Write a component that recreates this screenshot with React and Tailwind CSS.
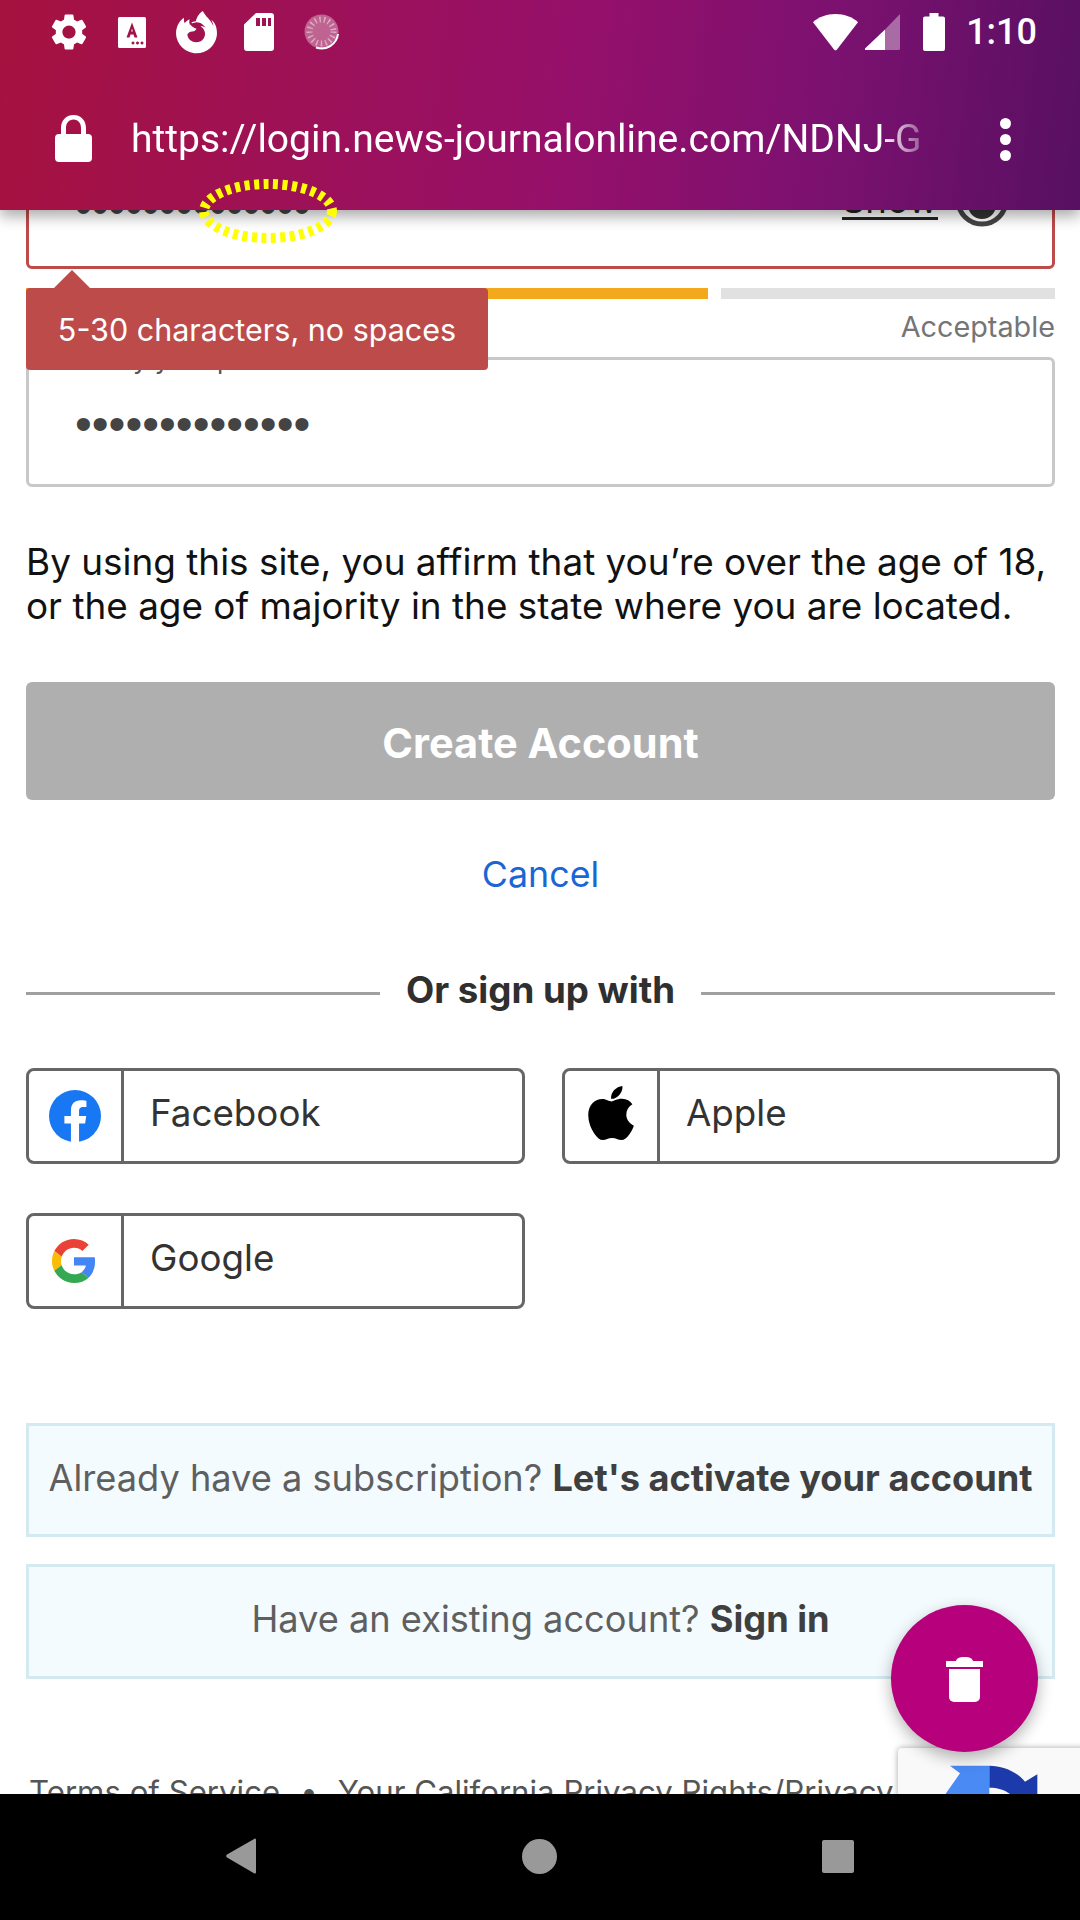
import React from "react";
import { FaFirefoxBrowser, FaApple } from "react-icons/fa";

const FONT = "font-['Inter','Noto_Sans',sans-serif]";

function Dots({ className = "" }) {
  return (
    <div className={`font-['Liberation_Sans',sans-serif] text-[48px] leading-[34px] tracking-[0px] text-[#444444] ${className}`}>
      ••••••••••••••
    </div>
  );
}

function StatusBar() {
  return (
    <div className="flex h-[64px] items-center justify-between pl-[50px] pr-[43px]">
      <div className="flex items-center">
        <svg viewBox="0 0 24 24" className="h-[44px] w-[44px] -ml-[3px] fill-white">
          <path d="M19.14 12.94c.04-.3.06-.61.06-.94 0-.32-.02-.64-.07-.94l2.03-1.58a.49.49 0 0 0 .12-.61l-1.92-3.32a.488.488 0 0 0-.59-.22l-2.39.96c-.5-.38-1.03-.7-1.62-.94l-.36-2.54a.484.484 0 0 0-.48-.41h-3.84c-.24 0-.43.17-.47.41l-.36 2.54c-.59.24-1.13.57-1.62.94l-2.39-.96c-.22-.08-.47 0-.59.22L2.74 8.87c-.12.21-.08.47.12.61l2.03 1.58c-.05.3-.09.63-.09.94s.02.64.07.94l-2.03 1.58a.49.49 0 0 0-.12.61l1.92 3.32c.12.22.37.29.59.22l2.39-.96c.5.38 1.03.7 1.62.94l.36 2.54c.05.24.24.41.48.41h3.84c.24 0 .44-.17.47-.41l.36-2.54c.59-.24 1.13-.56 1.62-.94l2.39.96c.22.08.47 0 .59-.22l1.92-3.32c.12-.22.07-.47-.12-.61l-2.01-1.58zM12 15.6c-1.98 0-3.6-1.62-3.6-3.6s1.62-3.6 3.6-3.6 3.6 1.62 3.6 3.6-1.62 3.6-3.6 3.6z" />
        </svg>
        <svg viewBox="0 0 28 31" className="ml-[27px] h-[31px] w-[28px]">
          <path fillRule="evenodd" fill="#fff" d="M1.500 0h25A1.500 1.500 0 0 1 28 1.500v28a1.500 1.500 0 0 1-1.500 1.500h-25A1.500 1.500 0 0 1 0 29.500v-28A1.500 1.500 0 0 1 1.500 0zM14 5.500l-5.500 15h3l1-3h3l1 3h3zM13.200 14.500l.8-3 .8 3zM15 24.500a1.500 1.500 0 1 0 .01 0zM19.500 24.500a1.500 1.500 0 1 0 .01 0zM24 24.500a1.500 1.500 0 1 0 .01 0z" />
        </svg>
        <FaFirefoxBrowser className="ml-[29px] h-[43px] w-[43px] text-white" />
        <svg viewBox="0 0 30 38" className="ml-[26px] h-[38px] w-[30px]">
          <path fillRule="evenodd" fill="#fff" d="M12 0h15a3 3 0 0 1 3 3v32a3 3 0 0 1-3 3H3a3 3 0 0 1-3-3V11.500zM12 5v8h4V5zM18 5v8h4V5zM24 5v8h3V5z" />
        </svg>
        <svg viewBox="0 0 36 36" className="ml-[30px] h-[36px] w-[36px]">
          <circle cx="17.500" cy="17.500" r="17" fill="#fff" fillOpacity="0.35" />
          <circle cx="17.500" cy="17.500" r="12" fill="none" stroke="#fff" strokeOpacity="0.45" strokeWidth="6" strokeDasharray="1.500 3" />
          <path d="M34 20a16.500 16.500 0 0 1-22 13.500" fill="none" stroke="#fff" strokeWidth="2" />
        </svg>
      </div>
      <div className="flex items-center">
        <svg viewBox="0 0 45 37" className="h-[37px] w-[45px] fill-white">
          <path d="M22.500 0C13.500 0 5.700 3 0 8.200L21 35.500a2 2 0 0 0 3 0L45 8.200C39.300 3 31.500 0 22.500 0z" />
        </svg>
        <svg viewBox="0 0 35 36" className="ml-[7px] h-[36px] w-[35px]">
          <path d="M20 15.500L0 34.500V36h20z" fill="#fff" />
          <path d="M20 15.500L35 0v34.500a1.500 1.500 0 0 1-1.500 1.500H20z" fill="#fff" fillOpacity="0.38" />
        </svg>
        <svg viewBox="0 0 22 38" className="ml-[23px] h-[38px] w-[22px] fill-white">
          <path d="M6.500 0h9v3.500H20a2 2 0 0 1 2 2V36a2 2 0 0 1-2 2H2a2 2 0 0 1-2-2V5.500a2 2 0 0 1 2-2h4.500z" />
        </svg>
        <span className="ml-[21px] font-['Roboto',sans-serif] text-[36px] font-medium leading-[40px] text-white">1:10</span>
      </div>
    </div>
  );
}

function UrlBar() {
  return (
    <div className="mt-[32px] flex h-[86px] items-center pl-[55px] pr-[69px]">
      <svg viewBox="0 0 37 47" className="-mt-[1px] h-[47px] w-[37px] fill-white">
        <path fillRule="evenodd" d="M18.500 0C10.500 0 6 6 6 13v6H4a4 4 0 0 0-4 4v20a4 4 0 0 0 4 4h29a4 4 0 0 0 4-4V23a4 4 0 0 0-4-4h-2v-6C31 6 26.500 0 18.500 0zM11 19v-6c0-5 3-8.500 7.500-8.500S26 8 26 13v6z" />
      </svg>
      <div className="ml-[39px] w-[790px] overflow-hidden whitespace-nowrap font-['Roboto',sans-serif] text-[39px] leading-[48px] text-white [mask-image:linear-gradient(to_right,#000_95%,rgba(0,0,0,0.3)_100%)]">
        https://login.news-journalonline.com/NDNJ-G
      </div>
      <div className="ml-auto flex flex-col gap-[5px]">
        <span className="h-[11px] w-[11px] rounded-full bg-white" />
        <span className="h-[11px] w-[11px] rounded-full bg-white" />
        <span className="h-[11px] w-[11px] rounded-full bg-white" />
      </div>
    </div>
  );
}

function Social({ label, children }) {
  return (
    <div className="flex h-[96px] rounded-[8px] border-[3px] border-[#666666] bg-white">
      <div className="flex w-[95px] items-center justify-center border-r-[3px] border-[#666666]">{children}</div>
      <div className="flex items-center pb-[6px] pl-[26px] text-[36.750px] leading-[44px] text-[#333333]">{label}</div>
    </div>
  );
}

export default function App() {
  return (
    <div className={`relative flex h-[1920px] w-[1080px] flex-col overflow-hidden bg-white ${FONT}`}>
      <header className="relative z-20 h-[210px] shrink-0 bg-[linear-gradient(97deg,#a6123f_0%,#96106a_52%,#7c1170_76%,#571062_100%)] shadow-[0_6px_14px_rgba(0,0,0,0.35)]">
        <StatusBar />
        <UrlBar />
      </header>

      <main className="relative flex-1 overflow-hidden pl-[26px] pr-[25px]">
        <div className="relative -mt-[71px] flex h-[130px] items-center rounded-[6px] border-[3px] border-[#bd4b4a] pl-[46px] pr-[43px]">
          <Dots className="mt-[6px]" />
          <span className="ml-auto mt-[-6px] border-b-[3px] border-[#222222] text-[36.500px] leading-[34px] text-[#222222]">Show</span>
          <svg viewBox="0 0 54 54" className="ml-[17px] mt-[-8px] h-[54px] w-[54px]">
            <circle cx="27" cy="27" r="24" fill="none" stroke="#444444" strokeWidth="5" />
            <circle cx="27" cy="32" r="14" fill="#333333" />
          </svg>
        </div>

        <div className="mt-[19px] flex h-[11px] gap-[13px]">
          <div className="flex-1 bg-[#f4a81c]" />
          <div className="flex-1 bg-[#f4a81c]" />
          <div className="flex-1 bg-[#e1e1e1]" />
        </div>

        <div className="flex h-[58px] justify-end pt-[12px] text-[28.800px] leading-[32px] text-[#757575]">Acceptable</div>

        <div className="flex h-[130px] flex-col rounded-[6px] border-[3px] border-[#c8c8c8] pl-[46px]">
          <span className="-mt-[16px] text-[26px] leading-[32px] text-[#555555]">Verify your password</span>
          <Dots className="mt-[31px]" />
        </div>

        <p className="mt-[53px] whitespace-nowrap text-[36.900px] leading-[44px] text-[#111111]">
          By using this site, you affirm that you’re over the age of 18,
          <br />
          or the age of majority in the state where you are located.
        </p>

        <button className="mt-[54px] flex h-[118px] w-full items-center justify-center rounded-[6px] bg-[#afafaf] pt-[4px] text-[41.500px] font-bold text-white">
          Create Account
        </button>

        <div className="mt-[52px] text-center text-[35.800px] leading-[44px] text-[#1a66d4]">Cancel</div>

        <div className="mt-[72px] flex h-[50px] items-center">
          <div className="h-[3px] flex-1 bg-[#a0a0a0]" />
          <span className="-mt-[6px] px-[26px] text-[36.700px] font-bold leading-[44px] text-[#2f2f2f]">Or sign up with</span>
          <div className="h-[3px] flex-1 bg-[#a0a0a0]" />
        </div>

        <div className="mt-[50px] grid w-[1034px] grid-cols-[499px_498px] gap-x-[37px] gap-y-[49px]">
          <Social label="Facebook">
            <svg viewBox="0 0 50 50" className="h-[52px] w-[52px]">
              <circle cx="25" cy="25" r="25" fill="#1877f2" />
              <path fill="#fff" d="M34.700 32.200L35.800 25H28.900v-4.700c0-2 1-3.900 4-3.900H36V10.300s-2.800-.5-5.500-.5c-5.700 0-9.400 3.400-9.400 9.700V25H14.800v7.200h6.300V50a25 25 0 0 0 7.800 0V32.200z" />
            </svg>
          </Social>
          <Social label="Apple">
            <FaApple className="h-[62px] w-[56px] -translate-y-[3px] text-black" />
          </Social>
          <Social label="Google">
            <svg viewBox="0 0 48 48" className="h-[44px] w-[44px] -translate-x-[1px]">
              <path fill="#EA4335" d="M24 9.500c3.540 0 6.710 1.220 9.210 3.600l6.850-6.850C35.900 2.380 30.470 0 24 0 14.620 0 6.510 5.380 2.560 13.220l7.980 6.190C12.430 13.720 17.740 9.500 24 9.500z" />
              <path fill="#4285F4" d="M46.980 24.550c0-1.570-.15-3.090-.38-4.550H24v9.020h12.940c-.58 2.960-2.260 5.480-4.780 7.180l7.730 6c4.510-4.180 7.090-10.360 7.090-17.650z" />
              <path fill="#FBBC05" d="M10.530 28.590c-.48-1.450-.76-2.990-.76-4.590s.27-3.140.76-4.590l-7.980-6.190C.92 16.460 0 20.120 0 24c0 3.880.92 7.540 2.560 10.780l7.970-6.190z" />
              <path fill="#34A853" d="M24 48c6.480 0 11.930-2.130 15.890-5.810l-7.730-6c-2.150 1.450-4.920 2.300-8.160 2.300-6.260 0-11.570-4.220-13.470-9.910l-7.980 6.190C6.510 42.620 14.620 48 24 48z" />
            </svg>
          </Social>
        </div>

        <div className="mt-[114px] flex h-[114px] items-center justify-center whitespace-nowrap border-[3px] border-[#d5e9f1] bg-[#f3fbfe] pb-[4px] text-[36.200px] text-[#5f5f5f]">
          <span>
            Already have a subscription? <b className="text-[#3f3f3f]">Let's activate your account</b>
          </span>
        </div>
        <div className="mt-[27px] flex h-[115px] items-center justify-center whitespace-nowrap border-[3px] border-[#d5e9f1] bg-[#f3fbfe] pb-[4px] text-[36.200px] text-[#5f5f5f]">
          <span>
            Have an existing account? <b className="text-[#3f3f3f]">Sign in</b>
          </span>
        </div>

        <div className="mt-[93px] whitespace-nowrap pl-[3px] text-[31.200px] leading-[40px] text-[#555555]">
          Terms of Service<span className="mx-[20px]">•</span>Your California Privacy Rights/Privacy
        </div>

        <div className="absolute left-[26px] top-[78px] flex h-[82px] w-[462px] items-center justify-center rounded-[4px] bg-[#bd4b4a] pt-[1px] text-[30.500px] text-white">
          <span className="absolute -top-[18px] left-[28px] h-0 w-0 border-x-[18px] border-b-[18px] border-x-transparent border-b-[#bd4b4a]" />
          5-30 characters, no spaces
        </div>

        <div className="absolute left-[898px] top-[1538px] h-[60px] w-[190px] rounded-tl-[4px] bg-[#f9f9f9] shadow-[0_0_6px_rgba(0,0,0,0.35)]">
          <svg viewBox="0 0 360 126" className="absolute left-[32px] top-[7px] h-[42px] w-[120px]">
            <path fill="#4a8af4" d="M60 32H178V126H44L48 115L90 55Z" />
            <path fill="#1c3aa9" d="M178 32C220 32 260 50 285 80L322 58V126H250C230 105 205 98 178 98Z" />
          </svg>
        </div>
        <div className="absolute left-[891px] top-[1395px] flex h-[147px] w-[147px] items-center justify-center rounded-full bg-[#b7007b] shadow-[0_6px_16px_rgba(0,0,0,0.3)]">
          <svg viewBox="0 0 37 47" className="h-[47px] w-[37px] fill-white">
            <path d="M0 6h10c1-3 3-4 8.500-4S26 3 27 6h10v6H0z" />
            <path d="M3 14h31v28a5 5 0 0 1-5 5H8a5 5 0 0 1-5-5z" />
          </svg>
        </div>
      </main>

      <nav className="relative z-20 flex h-[126px] shrink-0 items-center bg-black pb-[2px] pl-[226px]">
        <svg viewBox="0 0 30 36" className="h-[36px] w-[30px] fill-[#999999]">
          <path d="M29 0.500a1.200 1.200 0 0 1 1 1.200v32.600a1.200 1.200 0 0 1-2 .9L1 19.500a2 2 0 0 1 0-3z" />
        </svg>
        <span className="ml-[266px] h-[35px] w-[35px] rounded-full bg-[#999999]" />
        <span className="ml-[265px] h-[33px] w-[32px] rounded-[2px] bg-[#999999]" />
      </nav>

      <svg viewBox="0 0 144 70" className="absolute left-[196px] top-[176px] z-30 h-[70px] w-[144px] fill-none">
        <ellipse cx="72" cy="35" rx="64" ry="27" stroke="#ffff00" strokeWidth="10" strokeDasharray="5 4.500" />
      </svg>
    </div>
  );
}
